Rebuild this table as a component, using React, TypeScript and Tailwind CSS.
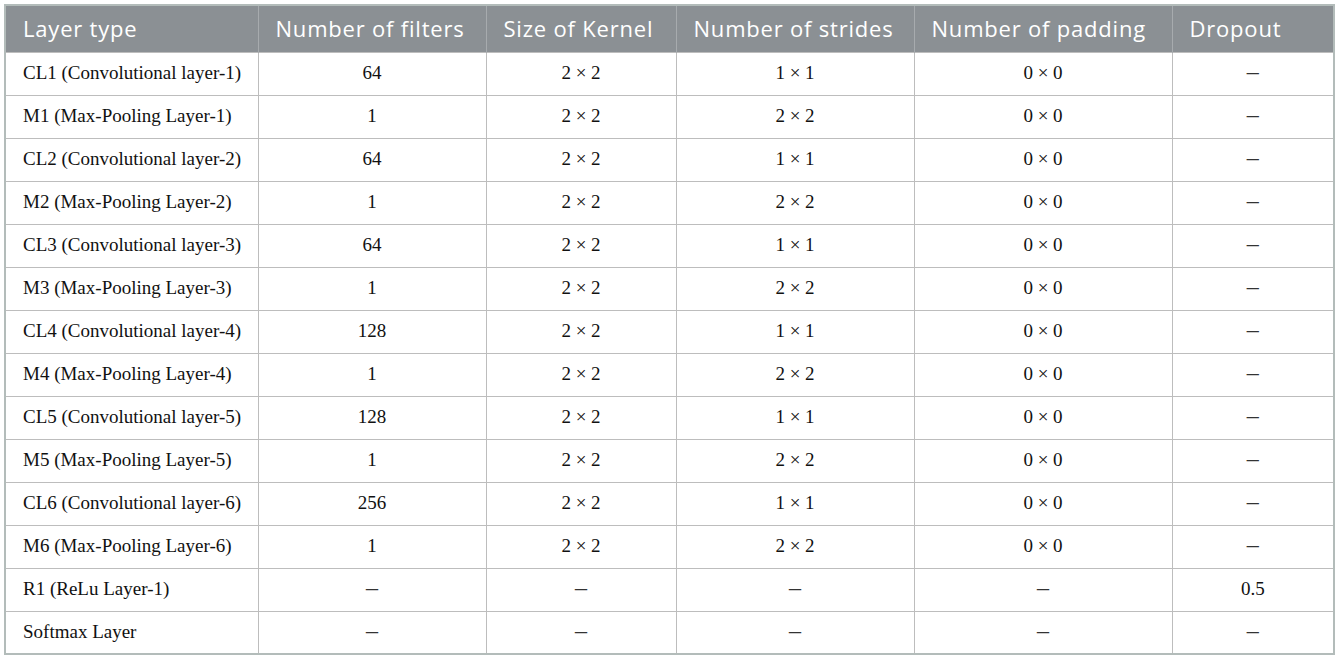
const headers = [
  "Layer type",
  "Number of filters",
  "Size of Kernel",
  "Number of strides",
  "Number of padding",
  "Dropout",
];

const widths = ["w-[253px]", "w-[228px]", "w-[190px]", "w-[238px]", "w-[258px]", "w-[162px]"];

const rows: string[][] = [
  ["CL1 (Convolutional layer-1)", "64", "2 × 2", "1 × 1", "0 × 0", "–"],
  ["M1 (Max-Pooling Layer-1)", "1", "2 × 2", "2 × 2", "0 × 0", "–"],
  ["CL2 (Convolutional layer-2)", "64", "2 × 2", "1 × 1", "0 × 0", "–"],
  ["M2 (Max-Pooling Layer-2)", "1", "2 × 2", "2 × 2", "0 × 0", "–"],
  ["CL3 (Convolutional layer-3)", "64", "2 × 2", "1 × 1", "0 × 0", "–"],
  ["M3 (Max-Pooling Layer-3)", "1", "2 × 2", "2 × 2", "0 × 0", "–"],
  ["CL4 (Convolutional layer-4)", "128", "2 × 2", "1 × 1", "0 × 0", "–"],
  ["M4 (Max-Pooling Layer-4)", "1", "2 × 2", "2 × 2", "0 × 0", "–"],
  ["CL5 (Convolutional layer-5)", "128", "2 × 2", "1 × 1", "0 × 0", "–"],
  ["M5 (Max-Pooling Layer-5)", "1", "2 × 2", "2 × 2", "0 × 0", "–"],
  ["CL6 (Convolutional layer-6)", "256", "2 × 2", "1 × 1", "0 × 0", "–"],
  ["M6 (Max-Pooling Layer-6)", "1", "2 × 2", "2 × 2", "0 × 0", "–"],
  ["R1 (ReLu Layer-1)", "–", "–", "–", "–", "0.5"],
  ["Softmax Layer", "–", "–", "–", "–", "–"],
];

export default function App() {
  return (
    <div className="bg-white w-[1337px] h-[658px] pt-[4px] pl-[4px]">
      <table className="table-fixed border-collapse w-[1329px] border-2 border-[#b3bcba]">
        <thead>
          <tr className="h-[47px] bg-[#8b9094]">
            {headers.map((h, i) => (
              <th
                key={h}
                className={`${widths[i]} text-left font-normal text-white text-[22px] tracking-[0.8px] pl-[17px] border-l border-[#a7abae] first:border-l-0 font-['Open_Sans',sans-serif]`}
              >
                {h}
              </th>
            ))}
          </tr>
        </thead>
        <tbody className="font-['Liberation_Serif',serif] text-[19px] text-[#111]">
          {rows.map((r, ri) => (
            <tr key={ri} className="h-[43px]">
              {r.map((c, ci) => (
                <td
                  key={ci}
                  className={`border border-[#bdbdbd] ${ci === 0 ? "text-left pl-[17px]" : "text-center"}`}
                >
                  {c === "–" ? <span className="text-[24px] leading-none text-[#333]">–</span> : c}
                </td>
              ))}
            </tr>
          ))}
        </tbody>
      </table>
    </div>
  );
}
